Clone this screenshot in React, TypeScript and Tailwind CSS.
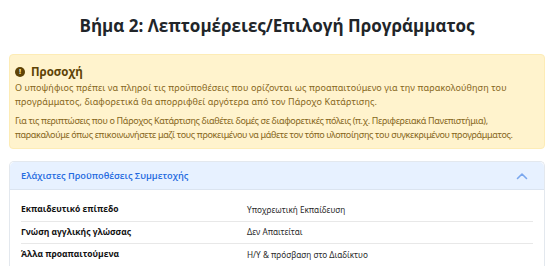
const rows = [
  { label: "Εκπαιδευτικό επίπεδο", value: "Υποχρεωτική Εκπαίδευση" },
  { label: "Γνώση αγγλικής γλώσσας", value: "Δεν Απαιτείται" },
  { label: "Άλλα προαπαιτούμενα", value: "Η/Υ & πρόσβαση στο Διαδίκτυο" },
];

export default function App() {
  return (
    <div className="min-h-screen bg-white px-[9px] pt-[12px] font-['Open_Sans',sans-serif]">
      {/* Title */}
      <h1 className="text-center text-[17px] font-bold leading-[28px] text-[#212529]">
        Βήμα 2: Λεπτομέρειες/Επιλογή Προγράμματος
      </h1>

      {/* Warning */}
      <div className="mt-[14px] rounded-[4px] border border-[#fdecb6] bg-[#fff3cd] px-[5px] pt-[8px] pb-[6px] text-[#86661a]">
        <div className="flex items-center gap-[6px] text-[11.5px] font-bold leading-[18px] text-[#5e4306]">
          <span className="flex h-[10px] w-[10px] items-center justify-center rounded-full bg-[#5e4306] text-[7.5px] font-bold leading-none text-[#fff3cd]">
            !
          </span>
          Προσοχή
        </div>
        <div className="whitespace-nowrap text-[9px] leading-[14px] font-['Noto_Sans',sans-serif]">
          <p className="tracking-[0.12px]">
            Ο υποψήφιος πρέπει να πληροί τις προϋποθέσεις που ορίζονται ως προαπαιτούμενο για την παρακολούθηση του
          </p>
          <p className="tracking-[0.12px]">
            προγράμματος, διαφορετικά θα απορριφθεί αργότερα από τον Πάροχο Κατάρτισης.
          </p>
          <p className="mt-[5px] tracking-[-0.33px]">
            Για τις περιπτώσεις που ο Πάροχος Κατάρτισης διαθέτει δομές σε διαφορετικές πόλεις (π.χ. Περιφερειακά Πανεπιστήμια),
          </p>
          <p className="tracking-[-0.33px]">
            παρακαλούμε όπως επικοινωνήσετε μαζί τους προκειμένου να μάθετε τον τόπο υλοποίησης του συγκεκριμένου προγράμματος.
          </p>
        </div>
      </div>

      {/* Accordion */}
      <div className="mt-[12px] rounded-t-[5px] border border-b-0 border-[#e3e8ee]">
        <div className="flex h-[28px] items-center justify-between rounded-t-[5px] bg-[#e7f1ff] px-[11px] shadow-[inset_0_-1px_0_#dbe4f0]">
          <span className="text-[9.2px] font-semibold text-[#236ae0]">Ελάχιστες Προϋποθέσεις Συμμετοχής</span>
          <svg width="12" height="8" viewBox="0 0 12 8" fill="none" className="mr-[5px]">
            <path d="M1.5 6.5 6 2l4.5 4.5" stroke="#7aa7ee" strokeWidth="1.6" strokeLinecap="round" strokeLinejoin="round" />
          </svg>
        </div>
        <div className="px-[11px] pt-[9px]">
          {rows.map((r) => (
            <div key={r.label} className="flex h-[22.5px] items-center border-b border-[#e8e8e8] text-[8.5px]">
              <div className="w-[226px] font-bold text-[#111]">{r.label}</div>
              <div className="font-['Noto_Sans',sans-serif] text-[8.2px] text-[#2b2b2b]">{r.value}</div>
            </div>
          ))}
        </div>
      </div>
    </div>
  );
}
